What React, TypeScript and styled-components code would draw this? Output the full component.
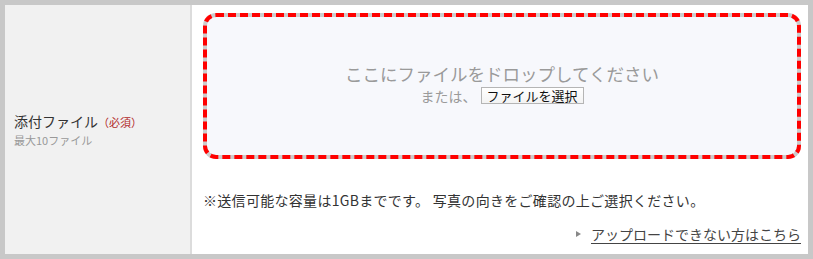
import React from "react";
import styled, { createGlobalStyle } from "styled-components";

const GlobalStyle = createGlobalStyle`
  html, body { margin: 0; padding: 0; background: #c8c8c8; }
  body { font-family: "Noto Sans CJK JP", "Noto Sans", sans-serif; }
  * { box-sizing: border-box; }
`;

const Frame = styled.div`
  width: 813px;
  height: 259px;
  padding: 5px 5px 5px 5px;
  background: #c8c8c8;
`;

const Row = styled.div`
  display: grid;
  grid-template-columns: 185px 2px 1fr;
  height: 249px;
`;

const LabelCell = styled.div`
  background: #f1f1f1;
  display: flex;
  flex-direction: column;
  justify-content: center;
  padding: 0 0 0 9px;
`;

const Divider = styled.div`
  background: #dcdcdc;
`;

const LabelTitle = styled.div`
  font-size: 14px;
  line-height: 20px;
  color: #333;
`;

const Required = styled.span`
  font-size: 11px;
  color: #b22a2a;
`;

const LabelSub = styled.div`
  font-size: 11px;
  line-height: 16px;
  color: #999;
`;

const ContentCell = styled.div`
  background: #fff;
  display: flex;
  flex-direction: column;
  padding: 8px 7px 0 11px;
`;

const DropZone = styled.div`
  height: 146px;
  border: 4px dashed #ff0000;
  border-radius: 13px;
  background: linear-gradient(#f7f8fc, #f7f8fc) padding-box,
    linear-gradient(#cccccc, #cccccc) border-box;
  display: flex;
  flex-direction: column;
  align-items: center;
  justify-content: center;
  padding-bottom: 5px;
`;

const DropText = styled.div`
  font-size: 17.5px;
  line-height: 24px;
  color: #9a9a9a;
`;

const SelectLine = styled.div`
  display: flex;
  align-items: center;
  gap: 4px;
  font-size: 14px;
  line-height: 20px;
  color: #9a9a9a;
`;

const FileButton = styled.button`
  font-family: inherit;
  font-size: 13px;
  line-height: 14px;
  height: 17px;
  width: 103px;
  padding: 0;
  color: #111;
  background: linear-gradient(#ffffff, #f3f3f3);
  border: 1px solid #b5b5b5;
  border-radius: 0;
`;

const Note = styled.div`
  margin-top: 31px;
  font-size: 14px;
  line-height: 20px;
  letter-spacing: 0.3px;
  color: #333;
`;

const LinkRow = styled.div`
  margin-top: 14px;
  display: flex;
  justify-content: flex-end;
  align-items: center;
  gap: 10px;
`;

const Arrow = styled.span`
  width: 0;
  height: 0;
  border-top: 3.5px solid transparent;
  border-bottom: 3.5px solid transparent;
  border-left: 5px solid #888;
`;

const HelpLink = styled.a`
  font-size: 14px;
  line-height: 20px;
  color: #444;
  text-decoration: underline;
  text-underline-offset: 3px;
`;

export default function App() {
  return (
    <>
      <GlobalStyle />
      <Frame>
        <Row>
          <LabelCell>
            <LabelTitle>
              添付ファイル<Required>（必須）</Required>
            </LabelTitle>
            <LabelSub>最大10ファイル</LabelSub>
          </LabelCell>
          <Divider />
          <ContentCell>
            <DropZone>
              <DropText>ここにファイルをドロップしてください</DropText>
              <SelectLine>
                または、<FileButton type="button">ファイルを選択</FileButton>
              </SelectLine>
            </DropZone>
            <Note>※送信可能な容量は1GBまでです。 写真の向きをご確認の上ご選択ください。</Note>
            <LinkRow>
              <Arrow />
              <HelpLink href="#">アップロードできない方はこちら</HelpLink>
            </LinkRow>
          </ContentCell>
        </Row>
      </Frame>
    </>
  );
}
